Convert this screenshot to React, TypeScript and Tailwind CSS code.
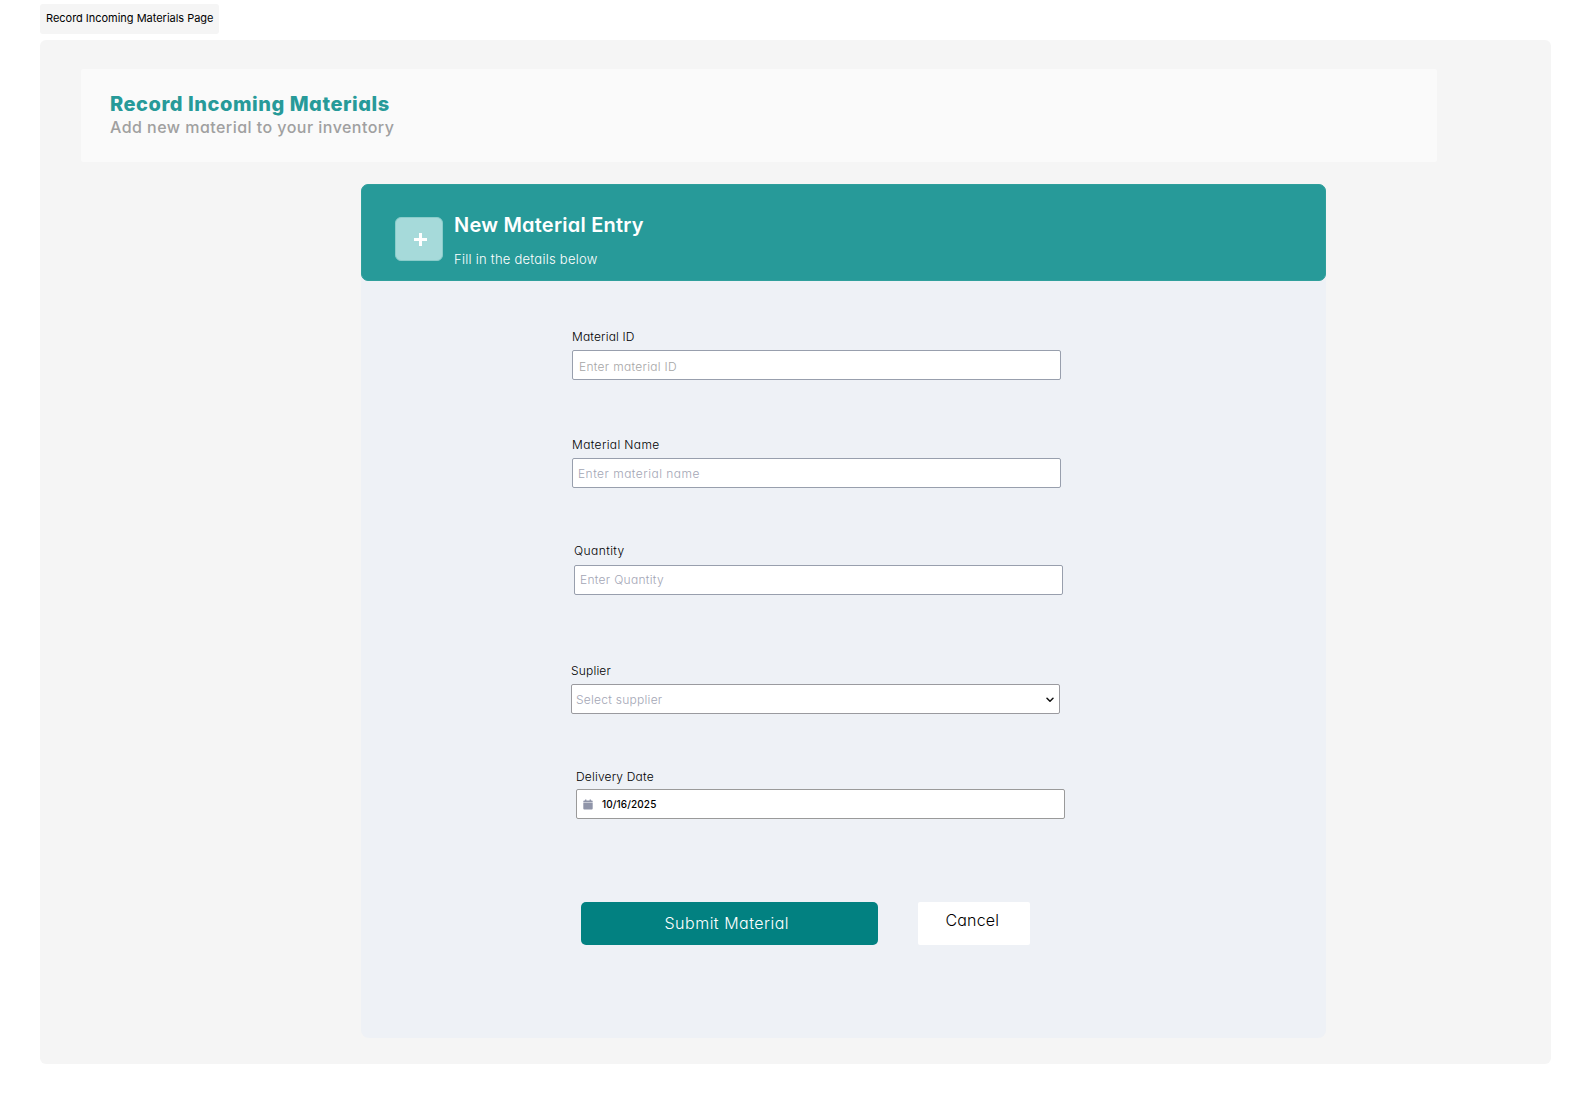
import type { ReactNode } from "react";

const alt = "[font-feature-settings:'cv11']";

function Field({
  label,
  labelClass,
  className,
  boxClass,
  children,
}: {
  label: string;
  labelClass: string;
  className: string;
  boxClass: string;
  children: ReactNode;
}) {
  return (
    <div className={`flex w-[489px] flex-col ${className}`}>
      <label className={`h-[18px] whitespace-nowrap text-[12px] leading-[18px] text-black ${labelClass}`}>
        {label}
      </label>
      <div className={`flex h-[30px] items-center rounded-[2px] border bg-white ${boxClass}`}>{children}</div>
    </div>
  );
}

function CalendarIcon() {
  return (
    <svg className="mr-[9px] ml-[6px] h-[11px] w-[10px] shrink-0" viewBox="0 0 10 11" fill="#9095a9">
      <path d="M2 0.5h1.4v1.1h3.2V0.5H8v1.1h0.9c.5 0 .8.3.8.8v1H0.3v-1c0-.5.3-.8.8-.8H2z" />
      <path d="M0.3 4h9.4v5.6c0 .6-.4.9-.9.9H1.2c-.5 0-.9-.3-.9-.9z" />
    </svg>
  );
}

export default function App() {
  return (
    <div className={`min-h-[1104px] w-[1591px] bg-white pt-1 pl-10 font-['Inter',sans-serif] ${alt}`}>
      <div className="flex h-[30px] w-[179px] rounded-[3px] bg-[#f5f5f5] pl-1.5 text-[11px] leading-[28px] tracking-[-0.02px] whitespace-nowrap text-black [font-feature-settings:normal]">
        Record Incoming Materials Page
      </div>

      <main className="mt-1.5 flex h-[1024px] w-[1511px] flex-col rounded-md bg-[#f5f5f5] pt-[29px]">
        <header className="ml-[41px] h-[93px] w-[1356px] rounded-[2px] bg-[#fafafa] pt-[23px] pl-[29px] whitespace-nowrap">
          <h1 className="text-[20px] leading-6 font-extrabold tracking-[0.54px] text-[#279a99]">Record Incoming Materials</h1>
          <p className="-mt-px text-[16px] leading-6 font-[450] tracking-[0.46px] text-[#a0a0a0]">
            Add new material to your inventory
          </p>
        </header>

        <section className="mt-[22px] ml-[321px] h-[854px] w-[965px] rounded-lg bg-[#eef1f6]">
          <div className="flex h-[97px] rounded-[7px] border border-[#2f9f9c] bg-[#279a99] pl-[33px]">
            <div className="mt-8 flex h-[44px] w-[48px] items-center justify-center rounded-md border border-[#8accca] bg-[#a6dada]">
              <svg className="mt-[1px] ml-[2px] h-[13px] w-[13px]" viewBox="0 0 13 13" stroke="#fff" strokeWidth="3">
                <path d="M6.5 0v13M0 6.5h13" />
              </svg>
            </div>
            <div className="ml-[11px] pt-7 whitespace-nowrap text-white">
              <h2 className="text-[20px] leading-6 font-semibold tracking-[0.22px]">New Material Entry</h2>
              <p className="mt-3 text-[13px] leading-5 font-light tracking-[0.25px]">Fill in the details below</p>
            </div>
          </div>

          <form className="pt-[47px] pl-[210px]">
            <Field label="Material ID" labelClass="font-[350] tracking-[0.16px]" className="ml-px" boxClass="mt-1 border-[#989fad]">
              <span className="mt-[3px] ml-[6px] text-[12px] leading-[18px] font-light tracking-[0.3px] text-[#a6a6a6]">
                Enter material ID
              </span>
            </Field>
            <Field label="Material Name" labelClass="font-[350] tracking-[0.36px]" className="mt-14 ml-px" boxClass="mt-1 border-[#989fad]">
              <span className="mt-px ml-[5px] text-[12px] leading-[18px] font-light tracking-[0.48px] text-[#a3a6b5]">
                Enter material name
              </span>
            </Field>
            <Field label="Quantity" labelClass="font-[350] tracking-[0.42px]" className="mt-[54px] ml-[3px]" boxClass="mt-[5px] border-[#989fad]">
              <span className="ml-[5px] text-[12px] leading-[18px] font-light tracking-[0.3px] text-[#a3a6b5]">
                Enter Quantity
              </span>
            </Field>
            <Field label="Suplier" labelClass="font-[350] tracking-[0.18px]" className="mt-[67px]" boxClass="mt-1 border-[#9a9a9f]">
              <span className="mt-px ml-1 text-[12px] leading-[18px] font-light tracking-[0.26px] text-[#a3a6b5]">
                Select supplier
              </span>
              <svg
                className="mt-[2px] mr-[5px] ml-auto h-[6px] w-[8px]"
                viewBox="0 0 8 6"
                fill="none"
                stroke="#111"
                strokeWidth="1.5"
                strokeLinecap="round"
                strokeLinejoin="round"
              >
                <path d="M1 1.2L4 4.2L7 1.2" />
              </svg>
            </Field>
            <Field label="Delivery Date" labelClass="font-light tracking-[0.18px]" className="mt-[54px] ml-[5px]" boxClass="mt-[3px] border-[#9a9a9a]">
              <CalendarIcon />
              <span className="text-[10px] leading-[18px] font-medium tracking-[0.1px] text-black [font-feature-settings:normal]">
                10/16/2025
              </span>
            </Field>

            <div className="mt-[83px] ml-2.5 flex h-[43px] gap-10 text-[16px] font-light whitespace-nowrap">
              <button
                type="button"
                className="flex w-[297px] items-start rounded-[5px] bg-[#028181] pt-[9px] pl-[83.5px] leading-6 tracking-[0.5px] text-white"
              >
                Submit Material
              </button>
              <button
                type="button"
                className="flex w-[112px] items-start rounded-[2px] bg-white pt-[6px] pl-[27.5px] leading-6 tracking-[0.15px] text-black"
              >
                Cancel
              </button>
            </div>
          </form>
        </section>
      </main>
    </div>
  );
}
